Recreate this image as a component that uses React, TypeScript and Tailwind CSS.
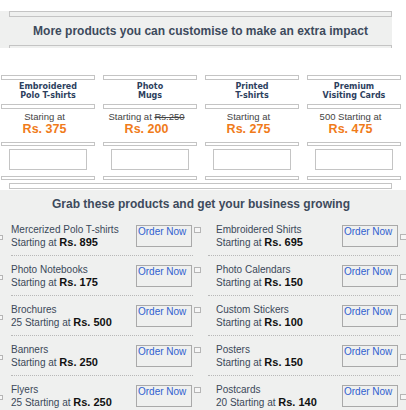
import React from "react";

const cards = [
  { t1: "Embroidered", t2: "Polo T-shirts", pre: "Staring at", strike: "", price: "Rs. 375" },
  { t1: "Photo", t2: "Mugs", pre: "Starting at ", strike: "Rs.250", price: "Rs. 200" },
  { t1: "Printed", t2: "T-shirts", pre: "Starting at", strike: "", price: "Rs. 275" },
  { t1: "Premium", t2: "Visiting Cards", pre: "500 Starting at", strike: "", price: "Rs. 475" },
];

const left = [
  { name: "Mercerized Polo T-shirts", pre: "Starting at ", price: "Rs. 895" },
  { name: "Photo Notebooks", pre: "Starting at ", price: "Rs. 175" },
  { name: "Brochures", pre: "25 Starting at ", price: "Rs. 500" },
  { name: "Banners", pre: "Starting at ", price: "Rs. 250" },
  { name: "Flyers", pre: "25 Starting at ", price: "Rs. 250" },
];

const right = [
  { name: "Embroidered Shirts", pre: "Starting at ", price: "Rs. 695" },
  { name: "Photo Calendars", pre: "Starting at ", price: "Rs. 150" },
  { name: "Custom Stickers", pre: "Starting at ", price: "Rs. 100" },
  { name: "Posters", pre: "Starting at ", price: "Rs. 150" },
  { name: "Postcards", pre: "20 Starting at ", price: "Rs. 140" },
];

function ItemText({ name, pre, price }: { name: string; pre: string; price: string }) {
  return (
    <div className="flex-1 pt-[7px] text-[10px] leading-[13px] text-[#3b4859] whitespace-nowrap">
      <div>{name}</div>
      <div>
        {pre}
        <b className="text-[11px] text-[#111]">{price}</b>
      </div>
    </div>
  );
}

function OrderBtn({ extra }: { extra: string }) {
  return (
    <div className={"mt-[9px] w-[56px] h-[22px] shrink-0 border border-[#a9a9a9] pl-[1px] text-[10px] leading-[12px] text-[#2f5fd0] whitespace-nowrap " + extra}>
      Order Now
    </div>
  );
}

export default function App() {
  return (
    <div className="w-[406px] h-[410px] bg-white overflow-hidden font-['Liberation_Sans',Arial,sans-serif]">
      <div className="mt-[11px] w-[392px] h-[37px] bg-[#eff0ef] pl-[9px] overflow-hidden">
        <div className="h-[6px] border border-[#c4c4c4]" />
        <div className="mt-[7px] text-[12px] leading-[14px] font-bold text-[#3d4a5c] text-center whitespace-nowrap">
          More products you can customise to make an extra impact
        </div>
        <div className="mt-[7px] h-[4px] border border-[#c4c4c4]" />
      </div>

      <div className="mt-[27px] pl-[1px] flex gap-[8px]">
        {cards.map((c) => (
          <div key={c.t1} className="w-[94px] shrink-0 flex flex-col">
            <div className="h-[5px] border border-[#c4c4c4]" />
            <div className="mt-[1.5px] text-center font-['DejaVu_Sans',Verdana,sans-serif] font-bold text-[8px] leading-[9px] text-[#2d3f5e] whitespace-nowrap">
              {c.t1}
              <br />
              {c.t2}
            </div>
            <div className="mt-[4.5px] h-[5px] border border-[#c4c4c4]" />
            <div className="mt-[2px] pr-[7px] text-center text-[9.5px] leading-[11px] text-[#444] whitespace-nowrap">
              {c.pre}
              {c.strike && <span className="line-through">{c.strike}</span>}
            </div>
            <div className="pr-[7px] text-center text-[12.5px] leading-[14px] font-bold text-[#f07b1a] whitespace-nowrap">
              {c.price}
            </div>
            <div className="mt-[6px] h-[4px] border border-[#c4c4c4]" />
            <div className="mt-[3px] mx-[8px] h-[21px] border border-[#c4c4c4]" />
            <div className="mt-[6px] h-[4px] border border-[#c4c4c4]" />
          </div>
        ))}
      </div>
      <div className="mt-[3px] ml-[9px] w-[383px] h-[6px] border border-[#c4c4c4]" />

      <div className="mt-[1px] h-[220px] bg-[#eff0ef] pt-[7px] overflow-hidden">
        <div className="w-[402px] text-center text-[12px] leading-[14px] font-bold text-[#3d4a5c] whitespace-nowrap">
          Grab these products and get your business growing
        </div>
        <div className="mt-[5px] flex items-start">
          <div className="ml-[-4px] flex flex-col shrink-0">
            {left.map((it) => (
              <div key={it.name} className="flex items-start h-[40px]">
                <div className="mt-[19px] w-[7px] h-[5px] shrink-0 border border-[#b5b5b5] bg-[#f6f6f6]" />
                <div className="ml-[8px] w-[182px] h-[40px] shrink-0 border-b border-dotted border-[#b8b8b8] flex items-start">
                  <ItemText {...it} />
                  <OrderBtn extra="mr-[1px]" />
                </div>
                <div className="ml-[1px] mt-[11px] w-[7px] h-[6px] shrink-0 border border-[#b5b5b5] bg-[#f6f6f6]" />
              </div>
            ))}
          </div>
          <div className="ml-[7px] flex flex-col shrink-0">
            {right.map((it) => (
              <div key={it.name} className="flex items-start h-[40px]">
                <div className="w-[192px] h-[40px] shrink-0 pl-[8px] border-b border-dotted border-[#b8b8b8] flex items-start">
                  <ItemText {...it} />
                  <OrderBtn extra="mr-[2px]" />
                </div>
                <div className="mt-[18px] w-[7px] h-[6px] shrink-0 border border-[#b5b5b5] bg-[#f6f6f6]" />
              </div>
            ))}
          </div>
        </div>
      </div>
    </div>
  );
}
